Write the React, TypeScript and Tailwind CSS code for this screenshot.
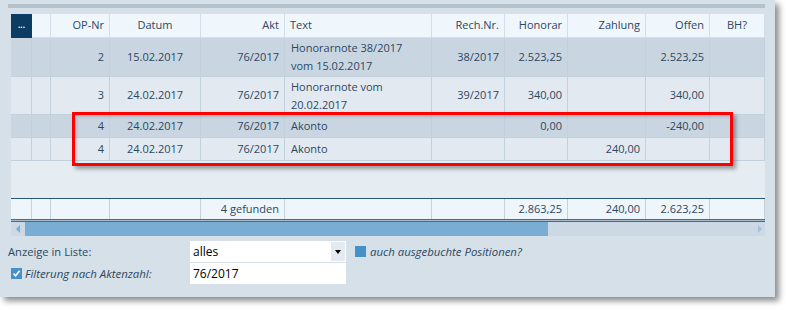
import React from "react";

const cols = "grid grid-cols-[21px_19px_59px_91px_84px_147px_73px_63px_78px_64px_55px]";

type Row = {
  op: string;
  datum: string;
  akt: string;
  text: string[];
  rech: string;
  honorar: string;
  zahlung: string;
  offen: string;
  dark: boolean;
  h: string;
};

const rows: Row[] = [
  { op: "2", datum: "15.02.2017", akt: "76/2017", text: ["Honorarnote 38/2017", "vom 15.02.2017"], rech: "38/2017", honorar: "2.523,25", zahlung: "", offen: "2.523,25", dark: true, h: "h-[39px]" },
  { op: "3", datum: "24.02.2017", akt: "76/2017", text: ["Honorarnote vom", "20.02.2017"], rech: "39/2017", honorar: "340,00", zahlung: "", offen: "340,00", dark: false, h: "h-[38px]" },
  { op: "4", datum: "24.02.2017", akt: "76/2017", text: ["Akonto"], rech: "", honorar: "0,00", zahlung: "", offen: "-240,00", dark: true, h: "h-[23px]" },
  { op: "4", datum: "24.02.2017", akt: "76/2017", text: ["Akonto"], rech: "", honorar: "", zahlung: "240,00", offen: "", dark: false, h: "h-[23px]" },
];

function Cell({ children, align = "right", className = "" }: { children?: React.ReactNode; align?: "left" | "right" | "center"; className?: string }) {
  const a = align === "left" ? "justify-start pl-[6px] text-left" : align === "center" ? "justify-center text-center" : "justify-end pr-[5px] text-right";
  return <div className={`flex items-center border-r border-b border-[#c3d1dd] ${a} ${className}`}>{children}</div>;
}

export default function App() {
  return (
    <div className="h-[310px] w-[789px] bg-white font-['Open_Sans',sans-serif] text-[11px] text-[#2c4862]">
      <div className="relative h-[297px] w-[775px] bg-[#d5e0e9] shadow-[4px_4px_6px_rgba(0,0,0,0.45)]">
        <div className="pl-[8px] pt-[4px]">
          <div className="h-[4px] w-[757px] bg-[#b5c1cb]" />
        </div>

        <div className="ml-[11px] mt-[6px] w-[754px]">
          {/* header */}
          <div className={`${cols} h-[24px] bg-[#eff6fc]`}>
            <div className="flex items-center justify-center bg-[#0c3c62] pb-[2px] text-[8px] font-bold leading-none text-white">...</div>
            <Cell className="border-[#d3dee8]" />
            <Cell className="border-[#d3dee8]">OP-Nr</Cell>
            <Cell align="center" className="border-[#d3dee8]">Datum</Cell>
            <Cell className="border-[#d3dee8]">Akt</Cell>
            <Cell align="left" className="border-[#d3dee8] !pl-[5px]">Text</Cell>
            <Cell className="border-[#d3dee8]">Rech.Nr.</Cell>
            <Cell className="border-[#d3dee8]">Honorar</Cell>
            <Cell className="border-[#d3dee8]">Zahlung</Cell>
            <Cell className="border-[#d3dee8]">Offen</Cell>
            <Cell align="center" className="border-[#d3dee8]">BH?</Cell>
          </div>

          {rows.map((r, i) => (
            <div key={i} className={`${cols} ${r.h} ${r.dark ? "bg-[#c9d6e1]" : "bg-[#e2e9f0]"}`}>
              <Cell />
              <Cell />
              <Cell>{r.op}</Cell>
              <Cell align="center">{r.datum}</Cell>
              <Cell>{r.akt}</Cell>
              <Cell align="left">
                <div className="leading-[18px]">
                  {r.text.map((t) => (
                    <div key={t}>{t}</div>
                  ))}
                </div>
              </Cell>
              <Cell>{r.rech}</Cell>
              <Cell>{r.honorar}</Cell>
              <Cell>{r.zahlung}</Cell>
              <Cell>{r.offen}</Cell>
              <Cell />
            </div>
          ))}

          <div className="h-[37px] bg-[#e5ecf2]" />

          {/* footer */}
          <div className={`${cols} h-[21px] border-t border-[#2a557a] bg-[#eef5fb]`}>
            <Cell className="border-b-0" />
            <Cell className="border-b-0" />
            <Cell className="border-b-0" />
            <Cell className="border-b-0" />
            <Cell className="border-b-0">4 gefunden</Cell>
            <Cell className="border-b-0" />
            <Cell className="border-b-0" />
            <Cell className="border-b-0">2.863,25</Cell>
            <Cell className="border-b-0">240,00</Cell>
            <Cell className="border-b-0">2.623,25</Cell>
            <Cell className="border-b-0" />
          </div>
          <div className="h-[1px] bg-[#4d6a84]" />
          <div className="h-[1px] bg-[#a9bccb]" />
          <div className="h-[1px] bg-[#4d6a84]" />

          {/* scrollbar */}
          <div className="flex h-[14px] bg-[#ccd9e4]">
            <div className="flex w-[14px] items-center justify-center">
              <div className="h-0 w-0 border-y-[4px] border-r-[4px] border-y-transparent border-r-[#7aaed4]" />
            </div>
            <div className="w-[523px] bg-[#79add4]" />
            <div className="flex flex-1 items-center justify-end pr-[3px]">
              <div className="h-0 w-0 border-y-[4px] border-l-[4px] border-y-transparent border-l-[#9cc3e1]" />
            </div>
          </div>
        </div>

        {/* form */}
        <div className="mt-[5px] flex flex-col gap-[1px] pl-[8px]">
          <div className="flex h-[21px] items-center">
            <div className="w-[182px] pt-[1px] text-[11.2px]">Anzeige in Liste:</div>
            <div className="flex h-[21px] w-[156px] items-center justify-between bg-white pl-[3px] pr-[1px] text-[12px] text-black">
              <span>alles</span>
              <div className="flex h-[19px] w-[14px] items-center justify-center bg-[#e4eaef]">
                <div className="h-0 w-0 border-x-[3.5px] border-t-[4px] border-x-transparent border-t-black" />
              </div>
            </div>
            <div className="ml-[9px] h-[11px] w-[11px] bg-[#4692c8]" />
            <span className="ml-[4px] text-[11.4px] italic">auch ausgebuchte Positionen?</span>
          </div>
          <div className="flex h-[21px] items-center">
            <div className="flex w-[182px] items-center pl-[3px]">
              <div className="flex h-[11px] w-[11px] items-center justify-center bg-[#4692c8]">
                <svg width="9" height="9" viewBox="0 0 9 9">
                  <path d="M1.5 4.6 L3.6 6.8 L7.6 1.8" fill="none" stroke="white" strokeWidth="1.6" />
                </svg>
              </div>
              <span className="ml-[3px] text-[11.4px] italic">Filterung nach Aktenzahl:</span>
            </div>
            <div className="flex h-[21px] w-[156px] items-center bg-white pl-[3px] text-[12px] text-black">76/2017</div>
          </div>
        </div>

        {/* red highlight */}
        <div className="absolute left-[72px] top-[112px] h-[54px] w-[661px] border-[3px] border-[#ff0000] shadow-[3px_3px_4px_rgba(0,0,0,0.35),inset_2px_2px_3px_rgba(0,0,0,0.15)]" />
      </div>
    </div>
  );
}
